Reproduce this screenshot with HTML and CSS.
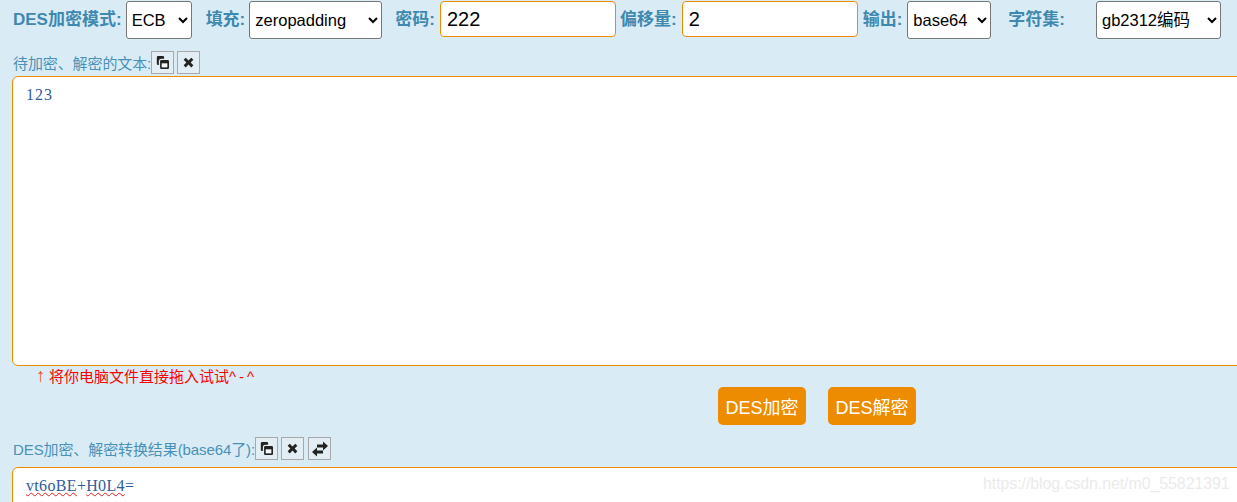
FILE: index.html
```html
<!DOCTYPE html>
<html lang="en">
<head>
    <meta charset="UTF-8">
    <meta name="viewport" content="width=device-width, initial-scale=1.0">
    <title>DES加密</title>
    <link rel="stylesheet" href="styles.css">
</head>
<body>
    <div class="toolbar">
        <label class="opt-label">DES加密模式:</label>
        <select class="opt-select mode"><option>ECB</option></select>
        <label class="opt-label padding-label">填充:</label>
        <select class="opt-select padding"><option>zeropadding</option></select>
        <label class="opt-label key-label">密码:</label>
        <input class="opt-input" type="text" value="222">
        <label class="opt-label iv-label">偏移量:</label>
        <input class="opt-input" type="text" value="2">
        <label class="opt-label out-label">输出:</label>
        <select class="opt-select output"><option>base64</option></select>
        <label class="opt-label charset-label">字符集:</label>
        <select class="opt-select charset"><option>gb2312编码</option></select>
    </div>

    <div class="box-head source-head">
        <span>待加密、解密的文本:</span>
        <button class="icon-btn" title="copy">
            <svg viewBox="0 0 16 16"><path d="M2.500 0h6A1.500 1.500 0 0 1 10 1.500V3.500H6.500A3 3 0 0 0 3.500 6.500V11H2.500A1.500 1.500 0 0 1 1 9.500V1.500A1.500 1.500 0 0 1 2.500 0z"/><path d="M6.500 5h8A1.500 1.500 0 0 1 16 6.500v8a1.500 1.500 0 0 1-1.500 1.500h-8A1.500 1.500 0 0 1 5 14.500v-8A1.500 1.500 0 0 1 6.500 5z"/><path fill="#f4f8fa" d="M7 9h7v5H7z"/></svg>
        </button>
        <button class="icon-btn" title="clear">
            <svg viewBox="0 0 16 16"><path d="M4.600 2 8 5.400 11.400 2 14 4.600 10.600 8 14 11.400 11.400 14 8 10.600 4.600 14 2 11.400 5.400 8 2 4.600z"/></svg>
        </button>
    </div>
    <div class="text-box source-box">123</div>

    <p class="hint"><span class="hint-arrow">↑</span>将你电脑文件直接拖入试试<span class="hint-smile">^-^</span></p>

    <div class="actions">
        <button class="action-btn">DES加密</button>
        <button class="action-btn">DES解密</button>
    </div>

    <div class="box-head result-head">
        <span>DES加密、解密转换结果(base64了):</span>
        <button class="icon-btn" title="copy">
            <svg viewBox="0 0 16 16"><path d="M2.500 0h6A1.500 1.500 0 0 1 10 1.500V3.500H6.500A3 3 0 0 0 3.500 6.500V11H2.500A1.500 1.500 0 0 1 1 9.500V1.500A1.500 1.500 0 0 1 2.500 0z"/><path d="M6.500 5h8A1.500 1.500 0 0 1 16 6.500v8a1.500 1.500 0 0 1-1.500 1.500h-8A1.500 1.500 0 0 1 5 14.500v-8A1.500 1.500 0 0 1 6.500 5z"/><path fill="#f4f8fa" d="M7 9h7v5H7z"/></svg>
        </button>
        <button class="icon-btn" title="clear">
            <svg viewBox="0 0 16 16"><path d="M4.600 2 8 5.400 11.400 2 14 4.600 10.600 8 14 11.400 11.400 14 8 10.600 4.600 14 2 11.400 5.400 8 2 4.600z"/></svg>
        </button>
        <button class="icon-btn swap-btn" title="swap">
            <svg viewBox="0 0 16 16"><path d="M5 3.500h6V.5L16 5l-5 4.500V6.500H5z"/><path d="M11 9.500H5v-3L0 11l5 4.500v-3h6z"/></svg>
        </button>
    </div>
    <div class="text-box result-box"><span class="typo">vt6oBE</span>+<span class="typo">H0L4</span>=</div>

    <div class="watermark">https://blog.csdn.net/m0_55821391</div>
</body>
</html>
```

FILE: styles.css
```css
html, body {
    height: 100%;
}
body {
    position: relative;
    margin: 0;
    padding: 0;
    overflow: hidden;
    background-color: #d9ecf6;
    font-family: "Liberation Sans", "Noto Sans CJK SC", sans-serif;
}
.toolbar {
    display: flex;
    align-items: flex-start;
    padding: 1px 0 0 13px;
}
.opt-label {
    font-size: 17px;
    font-weight: bold;
    line-height: 38px;
    color: #3f88af;
    margin-right: 4px;
    white-space: nowrap;
}
.padding-label {
    margin-left: 14px;
}
.key-label {
    margin-left: 13px;
    margin-right: 5px;
}
.iv-label {
    margin-left: 4px;
    margin-right: 5px;
}
.out-label {
    margin-left: 5px;
    margin-right: 5px;
}
.charset-label {
    margin-left: 17px;
    margin-right: 31px;
}
.opt-select {
    height: 38px;
    padding: 0 1px;
    border: 1px solid #767676;
    border-radius: 3px;
    background: white;
    color: black;
    font-family: "Liberation Sans", "Noto Sans CJK SC", sans-serif;
    font-size: 16.5px;
}
.mode {
    width: 66px;
}
.padding {
    width: 133px;
}
.output {
    width: 84px;
}
.charset {
    width: 125px;
}
.opt-input {
    box-sizing: border-box;
    width: 176px;
    height: 36px;
    padding: 0 6px;
    border: 1px solid #ee8c00;
    border-radius: 4px;
    outline: none;
    background: white;
    color: black;
    font-family: "Liberation Sans", sans-serif;
    font-size: 20px;
}
.box-head {
    display: flex;
    align-items: center;
    height: 23px;
    padding-left: 13px;
    font-size: 15px;
    letter-spacing: -0.1px;
    color: #4a90b6;
}
.source-head {
    margin-top: 12px;
}
.result-head {
    margin-top: 12px;
}
.icon-btn {
    box-sizing: border-box;
    width: 23px;
    height: 23px;
    padding: 0;
    margin-right: 3px;
    border: 1px solid #a8a8a8;
    background: #e3eef4;
    display: flex;
    align-items: center;
    justify-content: center;
}
.icon-btn svg {
    width: 13px;
    height: 13px;
    fill: #222;
}
.swap-btn {
    margin-left: 1px;
}
.swap-btn svg {
    width: 16px;
    height: 16px;
}
.text-box {
    box-sizing: border-box;
    width: 1300px;
    margin: 2px 0 0 12px;
    padding: 8px 13px;
    border: 1px solid #ee8c00;
    border-radius: 6px;
    background: white;
    color: #35589e;
    font-family: "Liberation Serif", serif;
    font-size: 16px;
    line-height: 20px;
}
.source-box {
    height: 290px;
    letter-spacing: 1px;
}
.result-box {
    height: 120px;
    margin-top: 7px;
    letter-spacing: 0.33px;
    color: #2f5c9c;
}
.typo {
    text-decoration: underline wavy #e02020 1px;
}
.hint {
    margin: 0 0 0 36px;
    font-size: 15px;
    line-height: 20px;
    color: #ff0000;
}
.hint-arrow {
    display: inline-block;
    width: 13px;
    font-size: 19px;
    line-height: 1;
    color: #f5502a;
}
.hint-smile {
    letter-spacing: 3px;
}
.actions {
    display: flex;
    gap: 22px;
    padding-left: 718px;
}
.action-btn {
    height: 38px;
    padding: 0 7.5px;
    border: none;
    border-radius: 5px;
    background: #ee8c00;
    color: white;
    font-family: "Liberation Sans", "Noto Sans CJK SC", sans-serif;
    font-size: 18px;
    white-space: nowrap;
}
.watermark {
    position: absolute;
    left: 983px;
    top: 474px;
    font-size: 16px;
    letter-spacing: -0.1px;
    line-height: 20px;
    color: #ebebeb;
    white-space: nowrap;
}
```
